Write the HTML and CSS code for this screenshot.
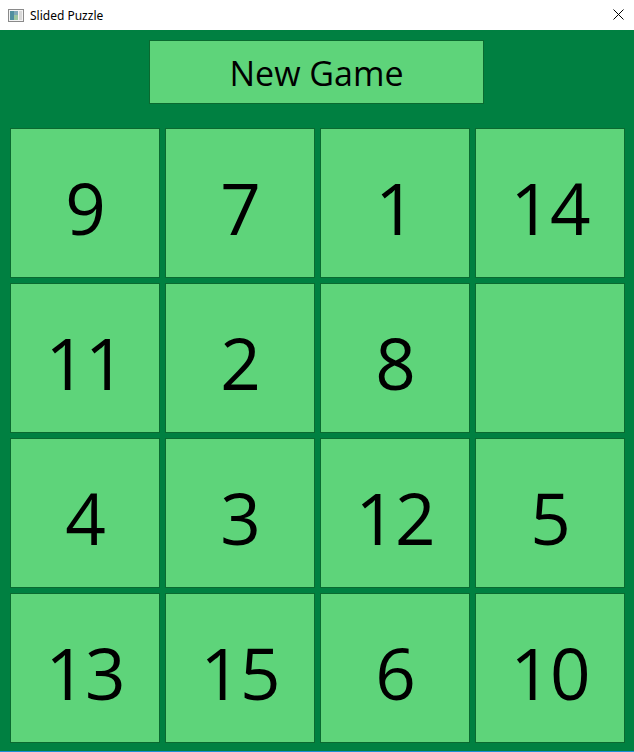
FILE: index.html
```html
<!DOCTYPE html>
<html>
<head>
<meta charset="utf-8">
<link rel="stylesheet" href="styles.css">
</head>
<body>
<div class="window">
  <div class="titlebar">
    <svg class="app-icon" width="16" height="13" viewBox="0 0 16 13">
      <rect x="0.5" y="0.5" width="15" height="12" fill="#f4f4f4" stroke="#8a8a8a"/>
      <rect x="2" y="2" width="8" height="9" fill="#7fa8b8"/>
      <rect x="2" y="2" width="4" height="9" fill="#4f8f9f"/>
      <rect x="6" y="6" width="4" height="5" fill="#9cc6a0"/>
      <rect x="11" y="2" width="3" height="9" fill="#d8d8d8"/>
    </svg>
    <span class="title">Slided Puzzle</span>
    <svg class="close" width="11" height="11" viewBox="0 0 11 11">
      <path d="M0.5 0.5 L10.5 10.5 M10.5 0.5 L0.5 10.5" stroke="#000" stroke-width="1"/>
    </svg>
  </div>
  <div class="client">
    <div class="btn-row"><div class="new-game">New Game</div></div>
    <div class="board">
      <div class="tile">9</div>
      <div class="tile">7</div>
      <div class="tile">1</div>
      <div class="tile">14</div>
      <div class="tile">11</div>
      <div class="tile">2</div>
      <div class="tile">8</div>
      <div class="tile"></div>
      <div class="tile">4</div>
      <div class="tile">3</div>
      <div class="tile">12</div>
      <div class="tile">5</div>
      <div class="tile">13</div>
      <div class="tile">15</div>
      <div class="tile">6</div>
      <div class="tile">10</div>
    </div>
  </div>
</div>
</body>
</html>
```

FILE: styles.css
```css
* { box-sizing: border-box; }
html, body { margin: 0; padding: 0; }
body { width: 634px; height: 752px; overflow: hidden; font-family: "Open Sans", "Noto Sans", sans-serif; }
.window { width: 634px; height: 752px; display: flex; flex-direction: column; }
.titlebar {
  height: 30px; background: #ffffff; display: flex; align-items: center;
  padding-left: 8px; position: relative;
}
.app-icon { display: block; margin-top: 1px; }
.title { font-size: 12px; color: #000; margin-left: 6px; font-family: "Noto Sans", "Open Sans", sans-serif; }
.close { position: absolute; right: 10px; top: 9px; }
.client {
  flex: 1; background: #008041; border-bottom: 1px solid #1d8fd6;
  display: flex; flex-direction: column;
}
.btn-row { display: flex; justify-content: center; padding-top: 10px; padding-right: 1px; }
.new-game {
  width: 335px; height: 64px; background: #5ed47a; border: 1px solid #0a6a30;
  display: flex; align-items: center; justify-content: center;
  font-size: 34px; color: #000; padding-top: 2px;
}
.board {
  margin-top: 24px; margin-left: 10px;
  display: grid; grid-template-columns: repeat(4, 150px); grid-auto-rows: 150px; gap: 5px;
}
.tile {
  background: #5ed47a; border: 1px solid #0a6a30;
  display: flex; align-items: center; justify-content: center;
  font-size: 71px; letter-spacing: -1px; color: #000; padding-top: 8px;
}
```
